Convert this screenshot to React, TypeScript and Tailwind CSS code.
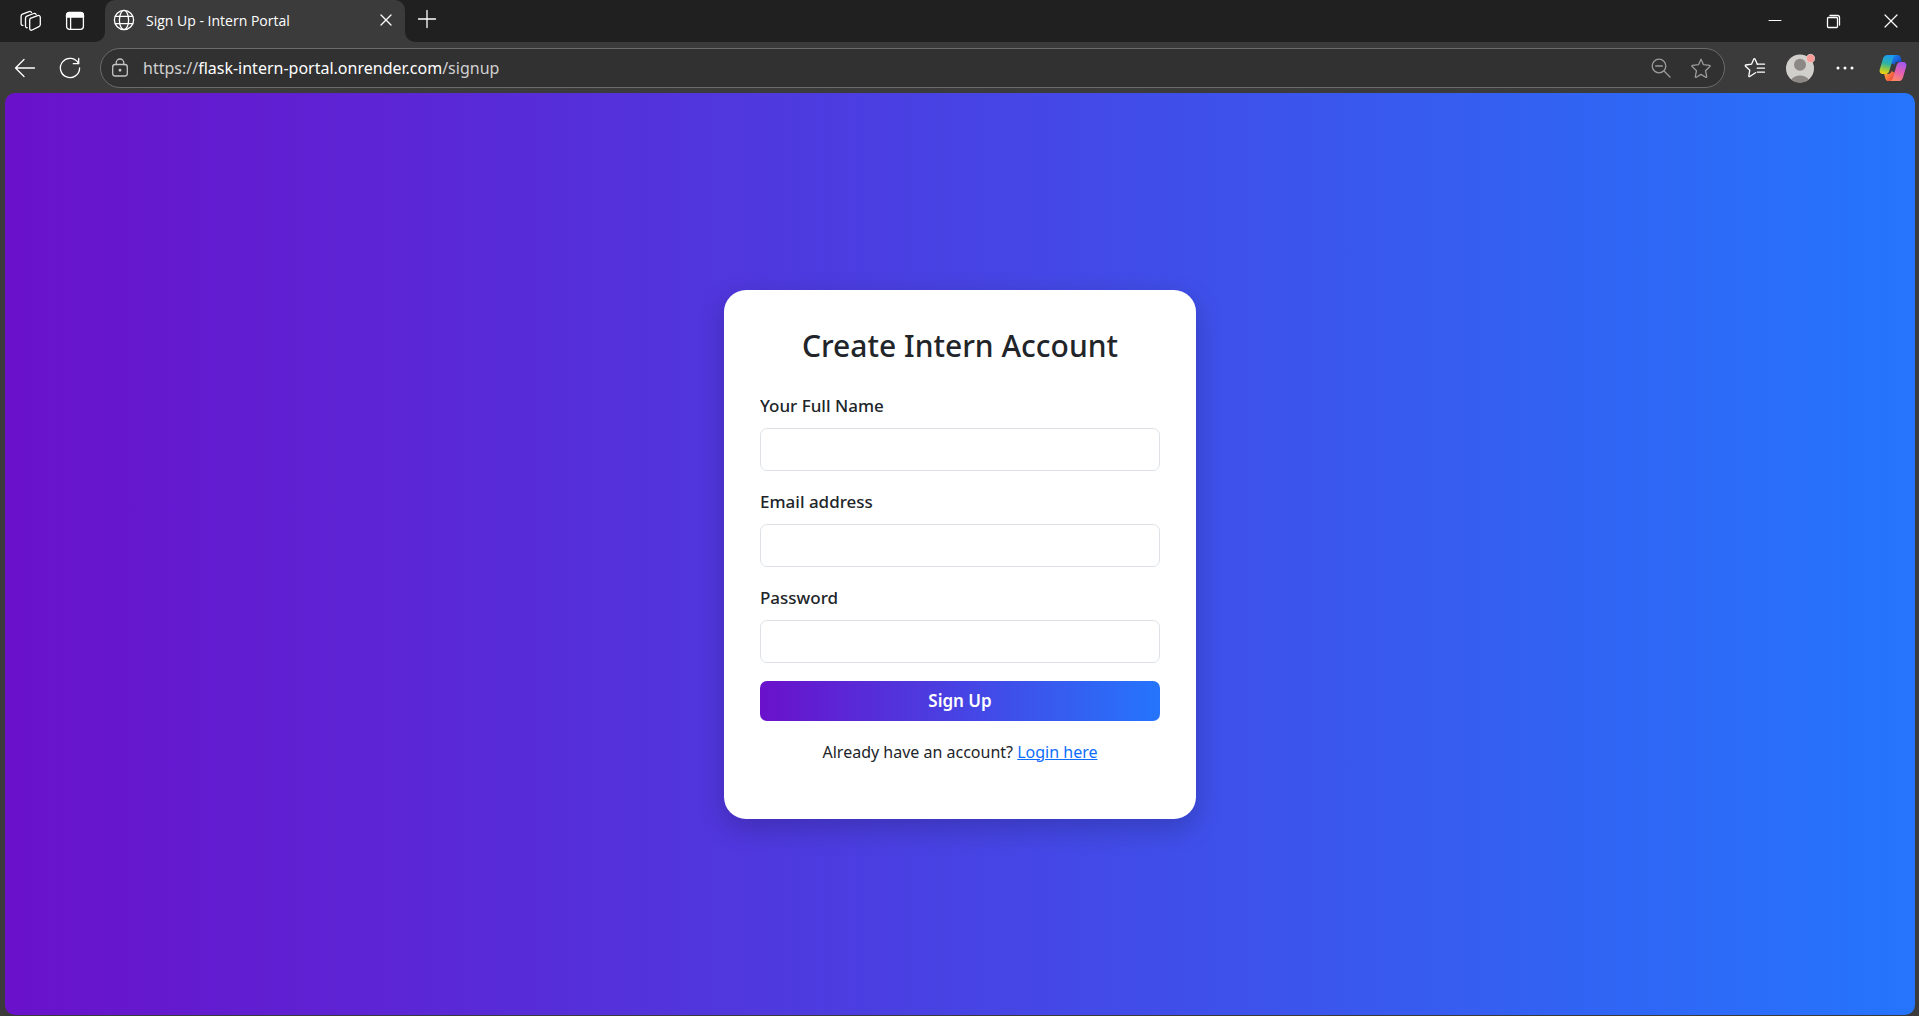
import React, { useId } from "react";

type IconProps = { className?: string; children: React.ReactNode };

function Icon({ className = "size-6", children }: IconProps) {
  return (
    <svg
      viewBox="0 0 24 24"
      fill="none"
      stroke="currentColor"
      strokeWidth="1.3"
      strokeLinecap="round"
      strokeLinejoin="round"
      aria-hidden="true"
      className={"shrink-0 " + className}
    >
      {children}
    </svg>
  );
}

function WorkspacesIcon() {
  return (
    <Icon>
      <path d="M12.3 9.3 19.6 6.6c1.5-.5 2.7.2 2.7 1.7v7.2c0 1-.5 1.7-1.400 2.100l-6.700 3.400c-1.400.6-2.500 0-2.500-1.500v-8.400c0-1 .5-1.600 1.300-1.900z" />
      <path d="M9.200 18.700c-1 .2-1.700-.5-1.700-1.600V9.200c0-1 .5-1.700 1.400-2.100l6.800-2.600c1.100-.4 2 0 2.400.9" />
      <path d="M5 16.300c-1.100.2-1.900-.5-1.900-1.600V7.300c0-1 .5-1.700 1.400-2.100L11 2.600c1.100-.4 2.100 0 2.500.9" />
    </Icon>
  );
}

function TabActionsIcon() {
  return (
    <Icon>
      <rect x="3.600" y="3.600" width="16.800" height="16.800" rx="2.800" />
      <path d="M3.500 8V6.200a2.700 2.700 0 0 1 2.700-2.700h11.600a2.700 2.700 0 0 1 2.700 2.700V8z" fill="currentColor" />
      <path d="M7.600 8v12.300" />
    </Icon>
  );
}

function GlobeIcon() {
  return (
    <Icon className="size-6">
      <circle cx="12" cy="12" r="9.600" />
      <ellipse cx="12" cy="12" rx="4.600" ry="9.600" />
      <path d="M3.300 8.300h17.400M3.300 15.700h17.400" />
    </Icon>
  );
}

function StarShape() {
  return (
    <path d="M12 3.200l2.500 5.500 6 .7c.7.100.9.7.4 1.200l-4.400 4.100 1.200 5.900c.1.600-.4 1-1 .7L12 18.400l-4.700 2.900c-.6.3-1.100-.1-1-.7l1.200-5.900-4.400-4.100c-.5-.5-.3-1.100.4-1.200l6-.7z" />
  );
}

function CopilotIcon() {
  const id = useId();
  const blue = id + "b";
  const cool = id + "c";
  const warm = id + "w";
  const fire = id + "f";
  return (
    <svg viewBox="0 0 28 28" className="size-7" aria-hidden="true">
      <defs>
        <linearGradient id={blue} x1="0" y1="0" x2="1" y2="1">
          <stop offset="0" stopColor="#1f8fee" />
          <stop offset="1" stopColor="#1238c8" />
        </linearGradient>
        <linearGradient id={cool} x1="0.5" y1="0" x2="0.3" y2="1">
          <stop offset="0" stopColor="#1a9af5" />
          <stop offset="0.45" stopColor="#2fb3a4" />
          <stop offset="0.75" stopColor="#9ccb3b" />
          <stop offset="1" stopColor="#f5cf12" />
        </linearGradient>
        <linearGradient id={warm} x1="0.7" y1="0" x2="0.3" y2="1">
          <stop offset="0" stopColor="#a259f0" />
          <stop offset="0.5" stopColor="#e45fb0" />
          <stop offset="1" stopColor="#ff8a63" />
        </linearGradient>
        <linearGradient id={fire} x1="0" y1="0" x2="1" y2="0.6">
          <stop offset="0" stopColor="#ffb13b" />
          <stop offset="1" stopColor="#f0443e" />
        </linearGradient>
      </defs>
      <path d="M12 1h6.500c1.800 0 2.700 1 3.200 2.600l1.100 4.100H19c-2 0-3 1-3.600 3L12 9z" fill={`url(#${blue})`} />
      <path d="M16 27H9.500c-1.800 0-2.700-1-3.200-2.600L5.200 20H9c2 0 3-1 3.600-3L16 19z" fill={`url(#${fire})`} />
      <path d="M8.500 1H17c-1.700.3-2.500 1.700-3 3.500L10.300 17c-.7 2.200-2 3.100-4.300 3.100H4.300c-3 0-4.300-2-3.400-5L4 4.600C4.800 2.200 6.200 1 8.500 1z" fill={`url(#${cool})`} />
      <path d="M19.500 27H11c1.700-.3 2.500-1.700 3-3.500L17.700 11c.7-2.200 2-3.100 4.300-3.100h1.700c3 0 4.300 2 3.400 5L24 23.400c-.8 2.400-2.200 3.600-4.500 3.600z" fill={`url(#${warm})`} />
    </svg>
  );
}

function TitleBar() {
  return (
    <header className="flex h-[42px] bg-[#3b3b3b] text-white">
      <div className="flex w-[105px] shrink-0 items-center gap-[21px] rounded-br-[10px] bg-[#202020] pl-[18px]">
        <button type="button" aria-label="Workspaces">
          <WorkspacesIcon />
        </button>
        <button type="button" aria-label="Tab actions">
          <TabActionsIcon />
        </button>
      </div>
      <div className="w-[300px] shrink-0 bg-[#202020]">
        <div className="flex h-full items-center rounded-t-[10px] bg-[#3b3b3b] pr-[7px] pb-[2px] pl-[7px]">
          <GlobeIcon />
          <span className="ml-[10px] flex-1 truncate text-[14px]">Sign Up - Intern Portal</span>
          <button type="button" aria-label="Close tab">
            <Icon>
              <path d="M7 7l10 10M17 7L7 17" />
            </Icon>
          </button>
        </div>
      </div>
      <div className="flex flex-1 items-center justify-between rounded-bl-[10px] bg-[#202020] pr-4 pl-[10px]">
        <button type="button" aria-label="New tab" className="mb-1">
          <Icon>
            <path d="M12 3.500v17M3.500 12h17" />
          </Icon>
        </button>
        <div className="flex items-center gap-[34px]">
          <button type="button" aria-label="Minimize">
            <Icon>
              <path d="M6 11.500h12" strokeWidth="1" />
            </Icon>
          </button>
          <button type="button" aria-label="Restore">
            <Icon>
              <rect x="6.500" y="8.500" width="10" height="10" rx="1" />
              <path d="M9 6.500h7.500a2 2 0 0 1 2 2v7.500" />
            </Icon>
          </button>
          <button type="button" aria-label="Close window">
            <Icon>
              <path d="M6 6l12 12M18 6L6 18" strokeWidth="1.2" />
            </Icon>
          </button>
        </div>
      </div>
    </header>
  );
}

function Toolbar() {
  return (
    <nav className="flex h-[51px] items-center bg-[#3b3b3b] pr-3 pl-[13px] text-white">
      <button type="button" aria-label="Back">
        <Icon>
          <path d="M2.500 12h19M11 3.500L2.500 12l8.500 8.500" />
        </Icon>
      </button>
      <button type="button" aria-label="Refresh" className="ml-[21px]">
        <Icon>
          <path d="M20.500 7.500A9.600 9.600 0 1 0 21.600 12" />
          <path d="M20.700 2.500v5.200h-5.400" />
        </Icon>
      </button>
      <div className="ml-[18px] flex h-10 flex-1 items-center rounded-full border border-[#6b6b6b] bg-[#313131] pr-[11px] pl-[7px]">
        <Icon className="size-6 text-[#c4c4c4]">
          <rect x="4.700" y="8.500" width="14.600" height="11.500" rx="2.500" />
          <path d="M8.200 8.500V6.800a3.800 3.800 0 0 1 7.600 0v1.700" />
          <circle cx="12" cy="14.300" r="0.800" fill="currentColor" />
        </Icon>
        <span className="ml-[11px] flex-1 truncate font-['Noto_Sans','Open_Sans',sans-serif] text-[16px] text-[#d0d0d0]">
          https://<span className="text-white">flask-intern-portal.onrender.com</span>/signup
        </span>
        <button type="button" aria-label="Zoom out" className="text-[#9b9b9b]">
          <Icon>
            <circle cx="10" cy="10" r="6.800" />
            <path d="M15 15l6 6M6.700 10h6.600" />
          </Icon>
        </button>
        <button type="button" aria-label="Add to favorites" className="ml-4 text-[#9b9b9b]">
          <Icon>
            <StarShape />
          </Icon>
        </button>
      </div>
      <button type="button" aria-label="Favorites" className="ml-[18px]">
        <Icon>
          <path d="M12.500 16.800l-5.700 3.700c-.6.400-1.100 0-1-.6l1-5.700-4.300-4c-.5-.5-.3-1.100.4-1.200l5.600-.8 2.300-5.200c.3-.6.900-.6 1.200 0l2.300 5.200" />
          <path d="M14.300 8.200H21.500M14.300 12.200h7.200M14.300 16.200h7.200" />
        </Icon>
      </button>
      <button type="button" aria-label="Profile" className="ml-[18px]">
        <svg viewBox="0 0 30 30" className="size-[30px]" aria-hidden="true">
          <circle cx="15" cy="15.500" r="14" fill="#d1cfcc" />
          <circle cx="15" cy="11.700" r="6" fill="#8c8885" />
          <path d="M6.300 26.500a10.500 9 0 0 1 17.400 0 14 14 0 0 1-17.400 0z" fill="#8c8885" />
          <circle cx="25.500" cy="5.500" r="4.200" fill="#f99b96" stroke="#e8dcda" strokeWidth="0.700" />
        </svg>
      </button>
      <button type="button" aria-label="Settings and more" className="ml-[18px]">
        <Icon>
          <g fill="currentColor" stroke="none">
            <circle cx="5" cy="12" r="1.500" />
            <circle cx="12" cy="12" r="1.500" />
            <circle cx="19" cy="12" r="1.500" />
          </g>
        </Icon>
      </button>
      <button type="button" aria-label="Copilot" className="ml-[22px]">
        <CopilotIcon />
      </button>
    </nav>
  );
}

type FieldProps = { id: string; label: string; type: string };

function Field({ id, label, type }: FieldProps) {
  return (
    <div className="mb-[18px]">
      <label htmlFor={id} className="mb-[9px] block text-[17px] leading-[26px] font-medium">
        {label}
      </label>
      <input
        id={id}
        name={id}
        type={type}
        className="block h-[43px] w-full rounded-[7px] border border-[#dee2e6] bg-white px-3 text-[17px]"
      />
    </div>
  );
}

function SignUpCard() {
  return (
    <section className="w-full max-w-[472px] rounded-[22px] bg-white p-9 font-['Noto_Sans','Open_Sans',sans-serif] text-[#212529] shadow-[0_9px_28px_rgba(0,0,0,0.2)]">
      <h1 className="mb-7 text-center text-[30px] leading-[39px] font-medium">Create Intern Account</h1>
      <form onSubmit={(event) => event.preventDefault()}>
        <Field id="name" label="Your Full Name" type="text" />
        <Field id="email" label="Email address" type="email" />
        <Field id="password" label="Password" type="password" />
        <button
          type="submit"
          className="h-10 w-full rounded-[7px] bg-linear-[90deg,#6a11cb,#2575fc] text-[17px] font-semibold text-white"
        >
          Sign Up
        </button>
      </form>
      <p className="my-[18px] text-center text-[16px] leading-[26px]">
        Already have an account?{" "}
        <a href="/login" className="text-[#0d6efd] underline">
          Login here
        </a>
      </p>
    </section>
  );
}

export default function App() {
  return (
    <div className="flex min-h-screen flex-col bg-[#3b3b3b] font-['Open_Sans','Noto_Sans',sans-serif]">
      <TitleBar />
      <Toolbar />
      <main className="mr-1 mb-px ml-[5px] flex flex-1 items-center justify-center rounded-[10px] bg-linear-[90deg,#6a11cb,#2575fc]">
        <SignUpCard />
      </main>
    </div>
  );
}
